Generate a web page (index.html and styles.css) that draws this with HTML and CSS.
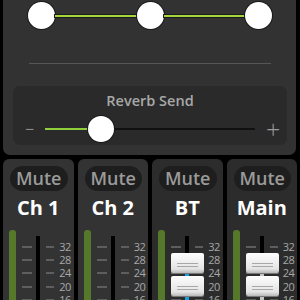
FILE: index.html
```html
<!DOCTYPE html>
<html>
<head>
<meta charset="utf-8">
<title>Mixer</title>
<link rel="stylesheet" href="styles.css">
</head>
<body>
<div class="top">
    <div class="steps">
        <span class="dot"></span>
        <span class="seg"></span>
        <span class="dot"></span>
        <span class="seg"></span>
        <span class="dot"></span>
    </div>
    <div class="sep"></div>
    <div class="send">
        <div class="send-title">Reverb Send</div>
        <div class="send-row">
            <span class="minus">−</span>
            <div class="send-track">
                <div class="send-fill"></div>
                <span class="send-knob"></span>
            </div>
            <span class="plus">+</span>
        </div>
    </div>
</div>

<div class="strips">
    <div class="strip">
        <div class="mute">Mute</div>
        <div class="name">Ch 1</div>
        <div class="meter">
            <div class="level"></div>
            <div class="ticks"><i></i><i></i><i></i><i></i><i></i></div>
            <div class="track"></div>
            <div class="scale">
                <div><i></i><b>32</b></div><div><i></i><b>28</b></div><div><i></i><b>24</b></div><div><i></i><b>20</b></div><div><i></i><b>16</b></div>
            </div>
        </div>
    </div>
    <div class="strip">
        <div class="mute">Mute</div>
        <div class="name">Ch 2</div>
        <div class="meter">
            <div class="level"></div>
            <div class="ticks"><i></i><i></i><i></i><i></i><i></i></div>
            <div class="track"></div>
            <div class="scale">
                <div><i></i><b>32</b></div><div><i></i><b>28</b></div><div><i></i><b>24</b></div><div><i></i><b>20</b></div><div><i></i><b>16</b></div>
            </div>
        </div>
    </div>
    <div class="strip dark">
        <div class="mute">Mute</div>
        <div class="name">BT</div>
        <div class="meter">
            <div class="level"></div>
            <div class="ticks"><i></i><i></i><i></i><i></i><i></i></div>
            <div class="track blue"></div>
            <div class="scale">
                <div><i></i><b>32</b></div><div><i></i><b>28</b></div><div><i></i><b>24</b></div><div><i></i><b>20</b></div><div><i></i><b>16</b></div>
            </div>
            <div class="fader"><span class="cap"></span><span class="cap"></span></div>
        </div>
    </div>
    <div class="strip dark">
        <div class="mute">Mute</div>
        <div class="name">Main</div>
        <div class="meter">
            <div class="level"></div>
            <div class="ticks"><i></i><i></i><i></i><i></i><i></i></div>
            <div class="track grey"></div>
            <div class="scale">
                <div><i></i><b>32</b></div><div><i></i><b>28</b></div><div><i></i><b>24</b></div><div><i></i><b>20</b></div><div><i></i><b>16</b></div>
            </div>
            <div class="fader"><span class="cap"></span><span class="cap"></span></div>
        </div>
    </div>
</div>
</body>
</html>
```

FILE: styles.css
```css
html,body{margin:0; padding:0;}
body{background:#000; width:300px; height:300px; overflow:hidden; font-family:"Open Sans","DejaVu Sans",sans-serif;}

/* top panel */
.top{margin:0 4px 0 3px; padding:2px 0 10px; background:#323232; border-radius:0 0 7px 7px;}
.steps{display:flex; align-items:center; padding:0 24px 0 25px; height:27px;}
.dot{width:27px; height:27px; border-radius:50%; background:#fff; box-shadow:0 0 0 1px #1a1a1a; flex:none;}
.seg{flex:1; height:2px; background:#a6d63c; box-shadow:0 0 0 1px #1c1c1c;}
.sep{height:1px; background:#565656; margin:34px 25px 0 26px;}

.send{margin:22px 9px 0 10px; padding:6px 0 3px; background:#2a2a2a; border-radius:7px;}
.send-title{text-align:center; font-size:14.5px; line-height:18px; color:#a8a8a8; font-weight:600;}
.send-row{display:flex; align-items:center; height:26px; margin-top:6px; padding:0 8px 0 12px;}
.minus{width:8px; font-size:16px; line-height:26px; color:#8a8a8a; text-align:center;}
.plus{width:13px; font-size:25px; line-height:26px; color:#9a9a9a; text-align:center; font-weight:300;}
.send-track{flex:1; height:2px; background:#111; margin:0 11px 0 12px; position:relative;}
.send-fill{width:46px; height:2px; background:#8fcf3a;}
.send-knob{position:absolute; left:43px; top:-12px; width:26px; height:26px; border-radius:50%; background:#fff; box-shadow:0 0 0 1px #1a1a1a;}

/* channel strips */
.strips{display:grid; grid-template-columns:repeat(4,1fr); gap:4px; padding:0 3px; margin-top:4px;}
.strip{background:#333; border-radius:6px 6px 0 0; height:142px; padding-top:7px; overflow:hidden;}
.strip.dark{background:#2c2c2c;}
.mute{margin:0 6px 0 7px; height:25px; border-radius:13px; background:#1e1e1e; color:#9a9a9a; font-size:18px; font-weight:600; line-height:25px; text-align:center;}
.name{margin-top:4px; height:26px; line-height:26px; text-align:center; color:#fff; font-size:20px; font-weight:700;}
.meter{position:relative; margin-top:9px; height:80px; display:flex;}
.level{width:7px; margin-left:6px; background:#56782a; border-radius:3px 3px 0 0;}
.ticks{margin-left:6px; width:10px; padding-top:10px;}
.ticks i{display:flex; align-items:center; height:13.33px;}
.ticks i::before{content:""; display:block; width:10px; height:2px; background:#5e5e5e;}
.track{width:4px; margin:6px 6px 0 4px; background:#000;}
.track.blue{background:linear-gradient(#000 0 28px,#1aa0e2 28px);}
.track.grey{background:linear-gradient(#000 0 28px,#c4c4c4 28px);}
.scale{padding-top:10px;}
.scale div{display:flex; align-items:center; height:13.33px;}
.scale i{width:8px; height:2px; background:#5e5e5e;}
.scale b{width:12px; margin-left:5px; text-align:right; font-size:11px; letter-spacing:-0.4px; line-height:12px; font-weight:400; color:#a8a8a8;}

.fader{position:absolute; left:19px; top:23px; display:flex; flex-direction:column; gap:3px;}
.cap{position:relative; width:33px; height:20px; border-radius:2px; background:linear-gradient(#fdfdfd,#e4e4e4 80%,#b8b8b8); box-shadow:0 1px 0 #777;}
.cap::before{content:""; position:absolute; left:6px; right:6px; top:10px; height:2px; border-top:1px solid #a8a8a8; border-bottom:1px solid #a8a8a8;}
```
